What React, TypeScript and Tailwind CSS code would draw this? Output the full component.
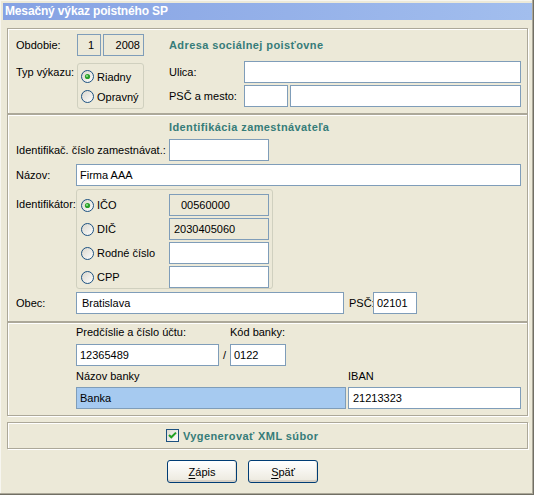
import React from "react";

// XP-style form, Tahoma look approximated with Liberation Sans
const teal = "font-bold text-[#367c79] tracking-[0.4px]";

function Panel({ className, children }: { className?: string; children?: React.ReactNode }) {
  return (
    <div
      className={`border border-[#aca899] shadow-[inset_1px_1px_0_#ffffff,1px_1px_0_#ffffff] ${className ?? ""}`}
    >
      {children}
    </div>
  );
}

function Input({ className, children }: { className?: string; children?: React.ReactNode }) {
  return (
    <div
      className={`h-[22px] shrink-0 border border-[#7f9db9] flex items-center pl-[3px] whitespace-nowrap ${className ?? "bg-white"}`}
    >
      {children}
    </div>
  );
}

function Radio({ checked }: { checked?: boolean }) {
  return (
    <svg width="13" height="13" viewBox="0 0 13 13" className="shrink-0">
      <defs>
        <linearGradient id="rg" x1="0" y1="0" x2="1" y2="1">
          <stop offset="0" stopColor="#d8d5cb" />
          <stop offset="1" stopColor="#ffffff" />
        </linearGradient>
      </defs>
      <circle cx="6.5" cy="6.5" r="6" fill="url(#rg)" stroke="#1c5180" strokeWidth="1" />
      {checked && (
        <>
          <circle cx="6.5" cy="6.5" r="2.6" fill="#2a9f2a" />
          <circle cx="6" cy="6" r="1.1" fill="#8fe08f" />
        </>
      )}
    </svg>
  );
}

function RadioRow({ checked, label }: { checked?: boolean; label: string }) {
  return (
    <div className="flex items-center gap-[3px] h-[13px]">
      <Radio checked={checked} />
      <span>{label}</span>
    </div>
  );
}

function Check() {
  return (
    <svg width="13" height="13" viewBox="0 0 13 13" className="shrink-0">
      <defs>
        <linearGradient id="cg" x1="0" y1="0" x2="1" y2="1">
          <stop offset="0" stopColor="#dcd9cf" />
          <stop offset="1" stopColor="#ffffff" />
        </linearGradient>
      </defs>
      <rect x="0.5" y="0.5" width="12" height="12" fill="url(#cg)" stroke="#1c5180" />
      <path d="M3 6 L5.3 8.3 L10 3.6" fill="none" stroke="#21a121" strokeWidth="2" />
    </svg>
  );
}

function XpButton({ first, rest }: { first: string; rest: string }) {
  return (
    <div className="w-[70px] h-[23px] rounded-[3px] border border-[#003c74] bg-linear-to-b from-[#ffffff] to-[#ece9de] shadow-[inset_0_-2px_0_#d6d0c5,inset_-1px_0_0_#e3e0d5] flex items-center justify-center">
      <span>
        <span className="underline underline-offset-2">{first}</span>
        {rest}
      </span>
    </div>
  );
}

export default function App() {
  return (
    <div className="relative w-[534px] h-[495px] bg-[#ece9d8] pt-[3px] text-[11px] leading-[14px] text-black font-['Liberation_Sans',Arial,sans-serif] shadow-[inset_-1px_-1px_0_#716f64,inset_-2px_-2px_0_#aca899,inset_1px_1px_0_#f7f6f0]">
      {/* title bar */}
      <div className="ml-[3px] mr-[2px] h-[17px] bg-linear-to-r from-[#86a2e3] to-[#a2beee] text-white font-bold text-[12px] leading-[17px] tracking-[-0.15px] pl-[2px]">
        Mesačný výkaz poistného SP
      </div>

      <div className="ml-[7px] mt-[8px] w-[521px]">
        {/* Obdobie + adresa */}
        <Panel className="h-[86px] pl-[8px] pt-[5px] flex">
          <div className="w-[153px] shrink-0">
            <div className="flex items-center h-[22px]">
              <span className="w-[61px]">Obdobie:</span>
              <div className="w-[24px] h-[22px] border border-[#7f9db9] flex items-center justify-end pr-[6px]">1</div>
              <div className="ml-[2px] w-[41px] h-[22px] border border-[#7f9db9] flex items-center justify-end pr-[3px]">
                2008
              </div>
            </div>
            <div className="flex mt-[7px]">
              <span className="w-[61px] pt-[2px]">Typ výkazu:</span>
              <div className="w-[67px] h-[46px] rounded-[3px] border border-[#d0d0bf] pl-[3px] pt-[6px] flex flex-col gap-[7px]">
                <RadioRow checked label="Riadny" />
                <RadioRow label="Opravný" />
              </div>
            </div>
          </div>
          <div className="flex-1">
            <div className={`mt-[4px] ${teal}`}>Adresa sociálnej poisťovne</div>
            <div className="flex items-center mt-[9px]">
              <span className="w-[75px]">Ulica:</span>
              <Input className="w-[277px] bg-white" />
            </div>
            <div className="flex items-center mt-[2px]">
              <span className="w-[75px]">PSČ a mesto:</span>
              <Input className="w-[44px] bg-white" />
              <Input className="ml-[2px] w-[231px] bg-white" />
            </div>
          </div>
        </Panel>

        {/* zamestnávateľ */}
        <Panel className="h-[208px] pl-[8px] pt-[5px]">
          <div className={`ml-[153px] ${teal}`}>Identifikácia zamestnávateľa</div>
          <div className="flex items-center mt-[5px]">
            <span className="w-[153px]">Identifikač. číslo zamestnávat.:</span>
            <Input className="w-[100px] bg-white" />
          </div>
          <div className="flex items-center mt-[3px]">
            <span className="w-[60px]">Názov:</span>
            <Input className="w-[445px] bg-white">Firma AAA</Input>
          </div>
          <div className="flex mt-[3px]">
            <span className="w-[60px] pt-[8px]">Identifikátor:</span>
            <div className="w-[197px] h-[100px] rounded-[3px] border border-[#d0d0bf] pt-[4px] pl-[4px] flex flex-col gap-[2px]">
              <div className="flex items-center h-[22px]">
                <div className="w-[88px]"><RadioRow checked label="IČO" /></div>
                <Input className="w-[100px] pl-[11px]">00560000</Input>
              </div>
              <div className="flex items-center h-[22px]">
                <div className="w-[88px]"><RadioRow label="DIČ" /></div>
                <Input className="w-[100px] pl-[4px]">2030405060</Input>
              </div>
              <div className="flex items-center h-[22px]">
                <div className="w-[88px]"><RadioRow label="Rodné číslo" /></div>
                <Input className="w-[100px] bg-white" />
              </div>
              <div className="flex items-center h-[22px]">
                <div className="w-[88px]"><RadioRow label="CPP" /></div>
                <Input className="w-[100px] bg-white" />
              </div>
            </div>
          </div>
          <div className="flex items-center mt-[3px]">
            <span className="w-[60px]">Obec:</span>
            <Input className="w-[268px] bg-white pl-[5px]">Bratislava</Input>
            <span className="ml-[5px] w-[24px]">PSČ:</span>
            <Input className="w-[44px] bg-white">02101</Input>
          </div>
        </Panel>

        {/* účet */}
        <Panel className="h-[94px] pl-[68px] pt-[2px]">
          <div className="flex">
            <span className="w-[154px]">Predčíslie a číslo účtu:</span>
            <span>Kód banky:</span>
          </div>
          <div className="flex items-center mt-[5px]">
            <Input className="w-[143px] bg-white">12365489</Input>
            <span className="w-[11px] text-center">/</span>
            <Input className="w-[56px] bg-white">0122</Input>
          </div>
          <div className="flex mt-[3px]">
            <span className="w-[272px]">Názov banky</span>
            <span>IBAN</span>
          </div>
          <div className="flex items-center mt-[4px]">
            <Input className="w-[270px] bg-[#a6caf0]">Banka</Input>
            <Input className="ml-[2px] w-[173px] bg-white pl-[4px]">21213323</Input>
          </div>
        </Panel>

        {/* XML */}
        <Panel className="mt-[6px] h-[27px] pl-[158px] flex items-center">
          <Check />
          <span className={`ml-[4px] ${teal}`}>Vygenerovať XML súbor</span>
        </Panel>

        <div className="mt-[11px] pl-[160px] flex gap-[11px]">
          <XpButton first="Z" rest="ápis" />
          <XpButton first="S" rest="päť" />
        </div>
      </div>
    </div>
  );
}
